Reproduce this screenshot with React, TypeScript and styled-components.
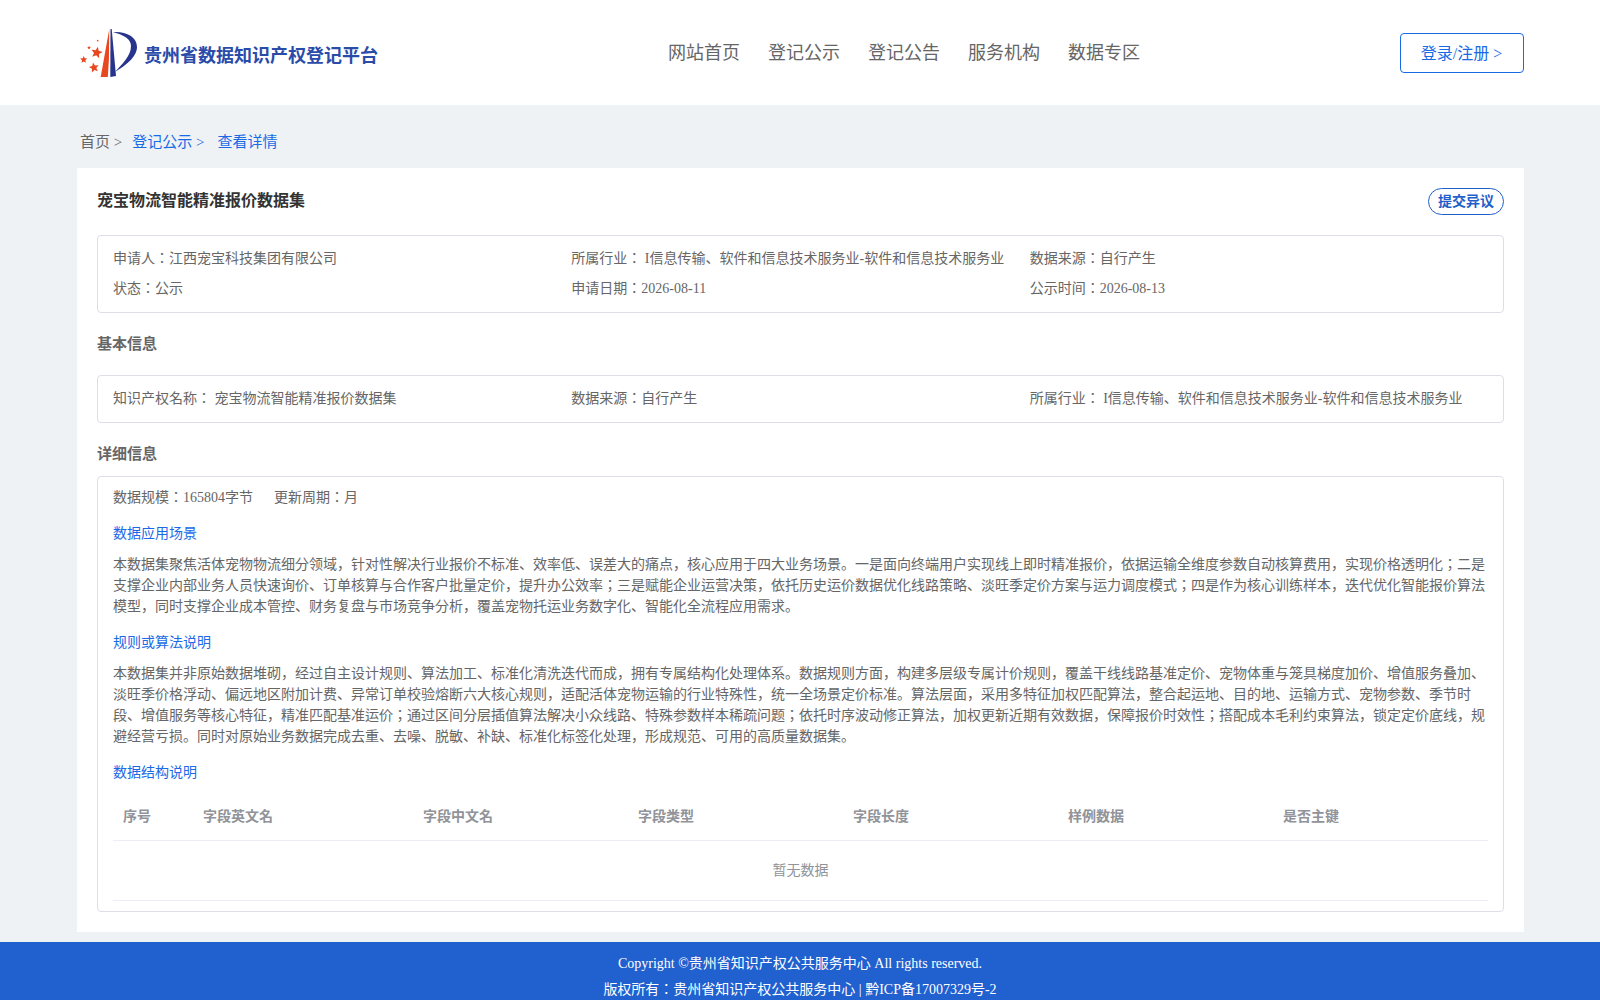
import React from "react";
import styled, { createGlobalStyle } from "styled-components";

const FONT = `"Liberation Serif", "Noto Sans CJK JP", serif`;

const Global = createGlobalStyle`
  html, body { margin: 0; padding: 0; background: #eff2f5; }
  body { font-family: ${FONT}; color: #666; }
  * { box-sizing: border-box; }
`;
const Header = styled.header`
  height: 105px; background: #fff; display: flex; align-items: center; padding: 0 76px 0 80px;
`;
const Brand = styled.div`
  display: flex; align-items: center; width: 298px;
`;
const BrandName = styled.span`
  font-size: 18px; font-weight: 700; color: #2b4ba9; line-height: 24px; margin-left: 7px; margin-top: 6px; white-space: nowrap;
`;
const Nav = styled.nav`
  display: flex; gap: 28px; margin-left: 290px;
`;
const NavItem = styled.a`
  font-size: 18px; line-height: 24px; color: #666; white-space: nowrap;
`;
const LoginButton = styled.button`
  margin-left: auto; width: 124px; height: 40px; background: #fff; border: 1px solid #1a6ae6; border-radius: 4px;
  color: #1a6ae6; font: 16px ${FONT}; padding: 0 1px 2px 0;
`;
const Crumbs = styled.div`
  height: 63px; padding: 27px 0 0 80px; font-size: 15px; line-height: 20px; display: flex; white-space: pre;
`;
const Crumb = styled.span<{ $active?: boolean; $gap?: number }>`
  color: ${p => (p.$active ? "#1a6ae6" : "#666")}; margin-right: ${p => p.$gap ?? 0}px;
`;
const Card = styled.main`
  margin: 0 76px 0 77px; height: 764px; background: #fff; padding: 20px;
`;
const TitleRow = styled.div`
  display: flex; justify-content: space-between; align-items: flex-start; height: 47px;
`;
const Title = styled.h1`
  margin: 1px 0 0; font-size: 16px; font-weight: 700; color: #333; line-height: 24px;
`;
const Dispute = styled.button`
  width: 76px; height: 27px; border: 1px solid #1f5fc9; border-radius: 14px; background: #fff; color: #1f5fc9;
  font: 700 14px ${FONT}; padding: 0 0 3px;
`;
const Box = styled.section<{ $h: number }>`
  height: ${p => p.$h}px; border: 1px solid #dcdfe6; border-radius: 4px; padding: 0 16px 0 15px;
`;
const InfoGrid = styled.div`
  display: grid; grid-template-columns: repeat(3, 1fr); font-size: 14px; line-height: 30px; padding-top: 8px; margin-right: -1px;
`;
const InfoCell = styled.div`
  white-space: nowrap; color: #666;
`;
const SectionTitle = styled.h2<{ $h: number }>`
  margin: 0; height: ${p => p.$h}px; font-size: 15px; font-weight: 700; color: #666; line-height: 20px; padding-top: 21px;
`;
const Meta = styled.div`
  display: flex; gap: 21px; font-size: 14px; line-height: 20px; padding-top: 11px; height: 46px;
`;
const SubTitle = styled.h3`
  margin: 0; font-size: 14px; font-weight: 400; color: #1a6ae6; line-height: 20px; height: 31px; padding-top: 1px;
`;
const Paragraph = styled.p`
  margin: 0 0 15px; font-size: 14px; line-height: 21px; color: #666;
`;
const Table = styled.table`
  width: 100%; table-layout: fixed; border-collapse: collapse; font-size: 14px; margin-top: -3px;
`;
const Th = styled.th`
  height: 50px; padding: 0 10px; text-align: left; font-weight: 700; color: #909399; border-bottom: 1px solid #ebeef5;
`;
const Empty = styled.td`
  height: 60px; padding: 0 0 2px; text-align: center; color: #909399; border-bottom: 1px solid #ebeef5;
`;
const Footer = styled.footer`
  margin-top: 10px; height: 58px; background: #2060cf; color: #fff; text-align: center; font-size: 14px; line-height: 26px; padding-top: 9px;
`;
const FooterLine = styled.div``;

const Star = ({ cx, cy, r, rot = 0 }: { cx: number; cy: number; r: number; rot?: number }) => {
  const pts = Array.from({ length: 10 }, (_, i) => {
    const a = (Math.PI / 5) * i - Math.PI / 2 + rot;
    const rad = i % 2 ? r * 0.45 : r;
    return `${(cx + rad * Math.cos(a)).toFixed(2)},${(cy + rad * Math.sin(a)).toFixed(2)}`;
  }).join(" ");
  return <polygon points={pts} fill="#e8481f" />;
};

const Logo = () => (
  <svg width="57" height="50" viewBox="80 28 57 50" aria-hidden="true">
    <polygon points="109.3,29 100.7,77 107.8,77 108.9,60" fill="#e8481f" />
    <polygon points="110.5,29 110.3,77 116,76 111.7,29" fill="#27348b" />
    <path d="M113 32 C125 31 137 36 137 47 C137 57 125 66 115 72 C122 64 131 56 131 46 C131 39 124 35 113 32 Z" fill="#27348b" />
    <Star cx={96.7} cy={52.7} r={6} rot={0.2} />
    <Star cx={94} cy={67.7} r={5.2} rot={-0.2} />
    <Star cx={83.7} cy={59.7} r={3.8} />
    <Star cx={89} cy={47.7} r={2} />
    <Star cx={97.7} cy={40.7} r={1.3} />
  </svg>
);

const columns = ["序号", "字段英文名", "字段中文名", "字段类型", "字段长度", "样例数据", "是否主键"];
const widths = [80, 220, 215, 215, 215, 215, 215];

export default function App() {
  return (
    <>
      <Global />
      <Header>
        <Brand>
          <Logo />
          <BrandName>贵州省数据知识产权登记平台</BrandName>
        </Brand>
        <Nav>
          {["网站首页", "登记公示", "登记公告", "服务机构", "数据专区"].map(n => (
            <NavItem key={n}>{n}</NavItem>
          ))}
        </Nav>
        <LoginButton>登录/注册 &gt;</LoginButton>
      </Header>
      <Crumbs>
        <Crumb $gap={10}>首页 &gt;</Crumb>
        <Crumb $active $gap={13}>登记公示 &gt;</Crumb>
        <Crumb $active>查看详情</Crumb>
      </Crumbs>
      <Card>
        <TitleRow>
          <Title>宠宝物流智能精准报价数据集</Title>
          <Dispute>提交异议</Dispute>
        </TitleRow>
        <Box $h={78}>
          <InfoGrid>
            <InfoCell>申请人：江西宠宝科技集团有限公司</InfoCell>
            <InfoCell>所属行业： I信息传输、软件和信息技术服务业-软件和信息技术服务业</InfoCell>
            <InfoCell>数据来源：自行产生</InfoCell>
            <InfoCell>状态：公示</InfoCell>
            <InfoCell>申请日期：2026-08-11</InfoCell>
            <InfoCell>公示时间：2026-08-13</InfoCell>
          </InfoGrid>
        </Box>
        <SectionTitle $h={62}>基本信息</SectionTitle>
        <Box $h={48}>
          <InfoGrid>
            <InfoCell>知识产权名称： 宠宝物流智能精准报价数据集</InfoCell>
            <InfoCell>数据来源：自行产生</InfoCell>
            <InfoCell>所属行业： I信息传输、软件和信息技术服务业-软件和信息技术服务业</InfoCell>
          </InfoGrid>
        </Box>
        <SectionTitle $h={53}>详细信息</SectionTitle>
        <Box $h={436}>
          <Meta>
            <span>数据规模：165804字节</span>
            <span>更新周期：月</span>
          </Meta>
          <SubTitle>数据应用场景</SubTitle>
          <Paragraph>本数据集聚焦活体宠物物流细分领域，针对性解决行业报价不标准、效率低、误差大的痛点，核心应用于四大业务场景。一是面向终端用户实现线上即时精准报价，依据运输全维度参数自动核算费用，实现价格透明化；二是支撑企业内部业务人员快速询价、订单核算与合作客户批量定价，提升办公效率；三是赋能企业运营决策，依托历史运价数据优化线路策略、淡旺季定价方案与运力调度模式；四是作为核心训练样本，迭代优化智能报价算法模型，同时支撑企业成本管控、财务复盘与市场竞争分析，覆盖宠物托运业务数字化、智能化全流程应用需求。</Paragraph>
          <SubTitle>规则或算法说明</SubTitle>
          <Paragraph>本数据集并非原始数据堆砌，经过自主设计规则、算法加工、标准化清洗迭代而成，拥有专属结构化处理体系。数据规则方面，构建多层级专属计价规则，覆盖干线线路基准定价、宠物体重与笼具梯度加价、增值服务叠加、淡旺季价格浮动、偏远地区附加计费、异常订单校验熔断六大核心规则，适配活体宠物运输的行业特殊性，统一全场景定价标准。算法层面，采用多特征加权匹配算法，整合起运地、目的地、运输方式、宠物参数、季节时段、增值服务等核心特征，精准匹配基准运价；通过区间分层插值算法解决小众线路、特殊参数样本稀疏问题；依托时序波动修正算法，加权更新近期有效数据，保障报价时效性；搭配成本毛利约束算法，锁定定价底线，规避经营亏损。同时对原始业务数据完成去重、去噪、脱敏、补缺、标准化标签化处理，形成规范、可用的高质量数据集。</Paragraph>
          <SubTitle>数据结构说明</SubTitle>
          <Table>
            <colgroup>
              {widths.map((w, i) => (
                <col key={i} width={w} />
              ))}
            </colgroup>
            <thead>
              <tr>
                {columns.map(c => (
                  <Th key={c}>{c}</Th>
                ))}
              </tr>
            </thead>
            <tbody>
              <tr>
                <Empty colSpan={7}>暂无数据</Empty>
              </tr>
            </tbody>
          </Table>
        </Box>
      </Card>
      <Footer>
        <FooterLine>Copyright ©贵州省知识产权公共服务中心 All rights reserved.</FooterLine>
        <FooterLine>版权所有：贵州省知识产权公共服务中心 | 黔ICP备17007329号-2</FooterLine>
      </Footer>
    </>
  );
}
